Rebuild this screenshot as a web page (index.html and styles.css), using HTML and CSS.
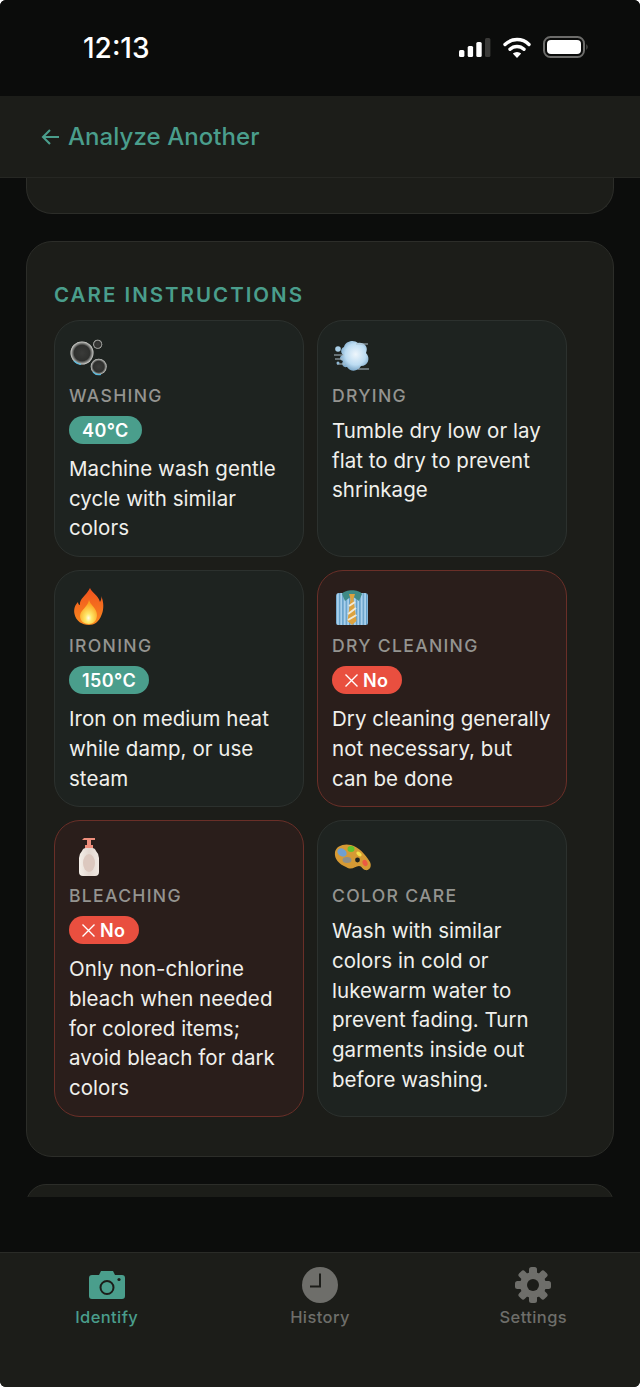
FILE: index.html
```html
<!DOCTYPE html>
<html>
<head>
  <meta charset="utf-8">
  <title>Care Instructions</title>
  <link rel="stylesheet" href="styles.css">
</head>
<body>
  <div class="phone">
    <div class="status-bar">
      <span class="time">12:13</span>
      <div class="status-icons">
        <svg width="32" height="20" viewBox="0 0 32 20">
          <rect x="0" y="13" width="5.4" height="7" rx="1.5" fill="#fff"/>
          <rect x="8.7" y="9" width="5.4" height="11" rx="1.5" fill="#fff"/>
          <rect x="17.3" y="5" width="5.4" height="15" rx="1.5" fill="#fff"/>
          <rect x="26" y="1" width="5.4" height="19" rx="1.5" fill="#3a3a38"/>
        </svg>
        <svg width="28" height="21" viewBox="0 0 28 21">
          <path d="M2 7.5 A17 17 0 0 1 26 7.5" fill="none" stroke="#fff" stroke-width="3.4" stroke-linecap="round"/>
          <path d="M7 12.3 A10 10 0 0 1 21 12.3" fill="none" stroke="#fff" stroke-width="3.4" stroke-linecap="round"/>
          <path d="M14 21 L9.8 16.6 A6 6 0 0 1 18.2 16.6 Z" fill="#fff"/>
        </svg>
        <svg width="46" height="22" viewBox="0 0 46 22">
          <rect x="1" y="1" width="40" height="20" rx="6.5" fill="none" stroke="#6c6c6a" stroke-width="2"/>
          <rect x="4" y="4" width="34" height="14" rx="4" fill="#fff"/>
          <path d="M43.5 8 Q45.5 11 43.5 14 Z" fill="#6c6c6a"/>
        </svg>
      </div>
    </div>

    <header class="top-bar">
      <svg width="19" height="18" viewBox="0 0 19 18">
        <path d="M18 9 H2 M9 2 L2 9 L9 16" fill="none" stroke="#4a9e8c" stroke-width="2.1"/>
      </svg>
      <span class="back-label">Analyze Another</span>
    </header>

    <main class="scroll">
      <div class="panel panel-prev"></div>

      <section class="panel panel-care">
        <h2 class="panel-title">CARE INSTRUCTIONS</h2>
        <div class="care-grid">

          <article class="care-cell">
            <div class="care-icon">
              <svg width="40" height="42" viewBox="0 0 40 42">
                <defs>
                  <radialGradient id="bubble" cx="50%" cy="50%" r="50%">
                    <stop offset="0%" stop-color="#3a3b39"/>
                    <stop offset="68%" stop-color="#2f302e"/>
                    <stop offset="90%" stop-color="#9a9b98"/>
                    <stop offset="100%" stop-color="#dcdcd8"/>
                  </radialGradient>
                </defs>
                <circle cx="13" cy="18" r="11.5" fill="url(#bubble)"/>
                <path d="M5 26 A11.5 11.5 0 0 0 12 29.4" fill="none" stroke="#59b9dc" stroke-width="1.2"/>
                <circle cx="28.7" cy="9.3" r="4.5" fill="url(#bubble)"/>
                <circle cx="29.7" cy="31.7" r="8" fill="url(#bubble)"/>
                <path d="M24 37 A8 8 0 0 0 32 39.4" fill="none" stroke="#59b9dc" stroke-width="1.2"/>
              </svg>
            </div>
            <h3 class="care-label">WASHING</h3>
            <span class="badge">40°C</span>
            <p class="care-text">Machine wash gentle cycle with similar colors</p>
          </article>

          <article class="care-cell">
            <div class="care-icon">
              <svg width="40" height="42" viewBox="0 0 40 42">
                <defs>
                  <radialGradient id="puff" cx="55%" cy="45%" r="60%">
                    <stop offset="0%" stop-color="#eef6fc"/>
                    <stop offset="60%" stop-color="#bcdcf2"/>
                    <stop offset="100%" stop-color="#6f9dc0"/>
                  </radialGradient>
                </defs>
                <path d="M12 12 C13 6 22 4 26 8 C32 7 37 12 34 18 C39 23 36 31 29 31 C26 37 18 37 15 32 C11 33 9 29 11 26 C7 25 7 21 11 20 C8 17 9 13 12 12 Z" fill="url(#puff)"/>
                <circle cx="6" cy="14" r="2.8" fill="#a9cfe8"/>
                <path d="M2 20 H12 M3 24 H11 M5 29 H13 M24 9 H36 M26 34 H37" stroke="#aebfca" stroke-width="1.1"/>
                <circle cx="6" cy="28" r="1.5" fill="#8fb7d3"/>
              </svg>
            </div>
            <h3 class="care-label">DRYING</h3>
            <p class="care-text">Tumble dry low or lay flat to dry to prevent shrinkage</p>
          </article>

          <article class="care-cell">
            <div class="care-icon">
              <svg width="40" height="42" viewBox="0 0 40 42">
                <defs>
                  <linearGradient id="flame" x1="0" y1="0" x2="0" y2="1">
                    <stop offset="0%" stop-color="#f0511e"/>
                    <stop offset="100%" stop-color="#f98a1e"/>
                  </linearGradient>
                  <radialGradient id="flame-core" cx="50%" cy="75%" r="60%">
                    <stop offset="0%" stop-color="#fffbe6"/>
                    <stop offset="30%" stop-color="#ffe96a"/>
                    <stop offset="100%" stop-color="#fba31f"/>
                  </radialGradient>
                </defs>
                <path d="M21 3 C23 8 29 10 31 17 C32 15 33 13 32 11 C35 16 35 25 32.5 30 C30 37 25 40 20 40 C13 40 7 36 5.5 29 C4.5 24 6 20 9 17 C9 19 10 20 11 20 C10 14 17 11 21 3 Z" fill="url(#flame)"/>
                <path d="M20 15 C21 20 28 23 28 30 C28 36 24 39 20 39 C15 39 11 36 11 31 C11 25 19 22 20 15 Z" fill="url(#flame-core)"/>
              </svg>
            </div>
            <h3 class="care-label">IRONING</h3>
            <span class="badge">150°C</span>
            <p class="care-text">Iron on medium heat while damp, or use steam</p>
          </article>

          <article class="care-cell care-cell-danger">
            <div class="care-icon">
              <svg width="40" height="42" viewBox="0 0 40 42">
                <defs>
                  <pattern id="stripes" width="3.4" height="4" patternUnits="userSpaceOnUse">
                    <rect width="3.4" height="4" fill="#a9d0ec"/>
                    <rect width="1.4" height="4" fill="#5f9cc6"/>
                  </pattern>
                </defs>
                <path d="M4 11 Q4 8 7 8 H33 Q36 8 36 11 V38 Q36 40 34 40 H6 Q4 40 4 38 Z" fill="url(#stripes)"/>
                <path d="M10 9 C13 4 27 4 30 9 L27 16 L20 11 L13 16 Z" fill="#3e8a86"/>
                <path d="M17 9 H23 L21.5 14 L24.5 36 L20 40 L15.5 36 L18.5 14 Z" fill="#dca23f"/>
                <path d="M17 21 L23 17 M16 29 L24 23 M16 35 L24.5 30" stroke="#f0ead8" stroke-width="2"/>
              </svg>
            </div>
            <h3 class="care-label">DRY CLEANING</h3>
            <span class="badge badge-no">
              <svg width="15" height="15" viewBox="0 0 15 15"><path d="M1.5 1.5 L13.5 13.5 M13.5 1.5 L1.5 13.5" stroke="#fff" stroke-width="1.4"/></svg>
              No
            </span>
            <p class="care-text">Dry cleaning generally not necessary, but can be done</p>
          </article>

          <article class="care-cell care-cell-danger">
            <div class="care-icon">
              <svg width="40" height="42" viewBox="0 0 40 42">
                <defs>
                  <linearGradient id="bottle" x1="0" y1="0" x2="1" y2="0">
                    <stop offset="0%" stop-color="#f4efe9"/>
                    <stop offset="50%" stop-color="#e4d8d1"/>
                    <stop offset="100%" stop-color="#f0e9e3"/>
                  </linearGradient>
                </defs>
                <path d="M15 3 H26 V5 H22 V10 H24 V14 H16 V10 H18 V5 H13 Z" fill="#ee8e7c"/>
                <path d="M13 16 Q14 13 17 13 H23 Q26 13 27 16 Q30 19 30 23 V37 Q30 41 26 41 H14 Q10 41 10 37 V23 Q10 19 13 16 Z" fill="url(#bottle)"/>
                <ellipse cx="20" cy="28" rx="6" ry="9" fill="#dcc8bf"/>
              </svg>
            </div>
            <h3 class="care-label">BLEACHING</h3>
            <span class="badge badge-no">
              <svg width="15" height="15" viewBox="0 0 15 15"><path d="M1.5 1.5 L13.5 13.5 M13.5 1.5 L1.5 13.5" stroke="#fff" stroke-width="1.4"/></svg>
              No
            </span>
            <p class="care-text">Only non-chlorine bleach when needed for colored items; avoid bleach for dark colors</p>
          </article>

          <article class="care-cell">
            <div class="care-icon">
              <svg width="40" height="42" viewBox="0 0 40 42">
                <path d="M3 17 C4 11 12 8 19 10 C27 12 33 19 38 27 C40 31 38 36 33 35 C30 34 30 31 27 31 C23 31 20 36 14 32 C7 29 2 24 3 17 Z" fill="#d69a34"/>
                <ellipse cx="10" cy="17.5" rx="5" ry="3.8" transform="rotate(35 10 17.5)" fill="#6f9fd0"/>
                <ellipse cx="19" cy="14" rx="3.5" ry="3" fill="#62c42f"/>
                <ellipse cx="27" cy="19" rx="3" ry="1.8" transform="rotate(35 27 19)" fill="#f4e04a"/>
                <ellipse cx="15" cy="25" rx="4.5" ry="3" fill="#8f8f88"/>
                <circle cx="25.5" cy="25" r="2.4" fill="#1e2320"/>
                <ellipse cx="33" cy="28" rx="2.4" ry="3.2" transform="rotate(-25 33 28)" fill="#ec5a42"/>
              </svg>
            </div>
            <h3 class="care-label">COLOR CARE</h3>
            <p class="care-text">Wash with similar colors in cold or lukewarm water to prevent fading. Turn garments inside out before washing.</p>
          </article>

        </div>
      </section>

      <div class="panel panel-next"></div>
    </main>

    <div class="tab-gap"></div>

    <nav class="tab-bar">
      <div class="tab tab-active">
        <svg width="36" height="36" viewBox="0 0 36 36">
          <path d="M3 8 H10 L12 4 H24 L26 8 H33 Q36 8 36 11 V29 Q36 32 33 32 H3 Q0 32 0 29 V11 Q0 8 3 8 Z" fill="#4a9e8c"/>
          <circle cx="18" cy="20.5" r="6.5" fill="none" stroke="#1c1d19" stroke-width="2"/>
          <circle cx="30" cy="12.5" r="1.6" fill="#1c1d19"/>
        </svg>
        <span class="tab-label">Identify</span>
      </div>
      <div class="tab">
        <svg width="36" height="36" viewBox="0 0 36 36">
          <circle cx="18" cy="18" r="18" fill="#6e6e6a"/>
          <path d="M18 6.5 V19.5 H8" fill="none" stroke="#1c1d19" stroke-width="2"/>
        </svg>
        <span class="tab-label">History</span>
      </div>
      <div class="tab">
        <svg width="36" height="36" viewBox="0 0 36 36">
          <g fill="#6e6e6a">
            <rect x="14" y="0" width="8" height="36" rx="2.5"/>
            <rect x="14" y="0" width="8" height="36" rx="2.5" transform="rotate(45 18 18)"/>
            <rect x="14" y="0" width="8" height="36" rx="2.5" transform="rotate(90 18 18)"/>
            <rect x="14" y="0" width="8" height="36" rx="2.5" transform="rotate(135 18 18)"/>
            <circle cx="18" cy="18" r="13"/>
          </g>
          <circle cx="18" cy="18" r="6" fill="#1c1d19"/>
        </svg>
        <span class="tab-label">Settings</span>
      </div>
    </nav>
  </div>
</body>
</html>
```

FILE: styles.css
```css
* {
  box-sizing: border-box;
}

body {
  margin: 0;
  background: #ffffff;
  font-family: Inter, "Liberation Sans", sans-serif;
}

.phone {
  width: 640px;
  height: 1387px;
  display: flex;
  flex-direction: column;
  background: #0c0d0c;
  border-radius: 6px;
  overflow: hidden;
}

/* Status bar */
.status-bar {
  height: 96px;
  flex: none;
  display: flex;
  justify-content: space-between;
  align-items: center;
  padding: 0 51px 0 83px;
  background: #0b0c0b;
}

.time {
  color: #ffffff;
  font-size: 28px;
  font-weight: 500;
  letter-spacing: 0;
}

.status-icons {
  display: flex;
  align-items: center;
  gap: 12px;
  margin-bottom: 2px;
}

/* Header */
.top-bar {
  height: 82px;
  flex: none;
  display: flex;
  align-items: center;
  gap: 8px;
  padding-left: 41px;
  background: #1c1d19;
  border-bottom: 1px solid #262723;
}

.back-label {
  color: #4a9e8c;
  font-size: 24px;
  font-weight: 500;
  letter-spacing: 0.07px;
}

/* Scrolling content */
.scroll {
  height: 1019px;
  flex: none;
  display: flex;
  flex-direction: column;
  gap: 27px;
  padding: 0 26px;
  overflow: hidden;
}

.panel {
  background: #1c1d19;
  border: 1px solid #2c2d29;
  border-radius: 26px;
  flex: none;
}

.panel-prev {
  height: 36px;
  border-top: none;
  border-radius: 0 0 26px 26px;
}

.panel-next {
  height: 40px;
}

.panel-care {
  height: 916px;
  padding: 40px 46px 0 27px;
}

.panel-title {
  margin: 0 0 12px;
  color: #4a9e8c;
  font-size: 20.5px;
  line-height: 26px;
  font-weight: 600;
  letter-spacing: 2px;
}

.care-grid {
  display: grid;
  grid-template-columns: 1fr 1fr;
  gap: 13px;
}

.care-cell {
  display: flex;
  flex-direction: column;
  align-items: flex-start;
  padding: 14px 15px 13px 14px;
  background: #1e2320;
  border: 1px solid #2c312e;
  border-radius: 26px;
}

.care-cell-danger {
  background: #2a1e1b;
  border-color: #6a2f28;
}

.care-icon {
  height: 49px;
  display: flex;
  align-items: flex-start;
}

.care-label {
  margin: 0;
  color: #949490;
  font-size: 17.6px;
  line-height: 24px;
  font-weight: 500;
  letter-spacing: 1.3px;
}

.badge {
  display: inline-flex;
  align-items: center;
  gap: 4px;
  height: 28px;
  margin-top: 8px;
  margin-bottom: 2px;
  padding: 0 13px;
  border-radius: 14px;
  background: #4a9e8c;
  color: #ffffff;
  font-size: 18px;
  font-weight: 600;
  letter-spacing: 0.4px;
}

.badge-no {
  background: #e94f3f;
  padding: 0 14px 0 12px;
}

.care-text {
  margin: 8px 0 0;
  color: #f0f0ec;
  font-size: 20.5px;
  line-height: 29.7px;
  letter-spacing: 0.05px;
}

/* Tabs */
.tab-gap {
  height: 55px;
  flex: none;
  background: #0c0d0c;
}

.tab-bar {
  flex: 1;
  display: flex;
  padding-top: 14px;
  background: #1c1d19;
  border-top: 1px solid #2a2b27;
}

.tab {
  flex: 1;
  display: flex;
  flex-direction: column;
  align-items: center;
  gap: 4px;
  color: #6e6e6a;
}

.tab-active {
  color: #4a9e8c;
}

.tab-label {
  font-size: 16.5px;
  line-height: 20px;
  font-weight: 500;
  letter-spacing: 0.4px;
}
```
